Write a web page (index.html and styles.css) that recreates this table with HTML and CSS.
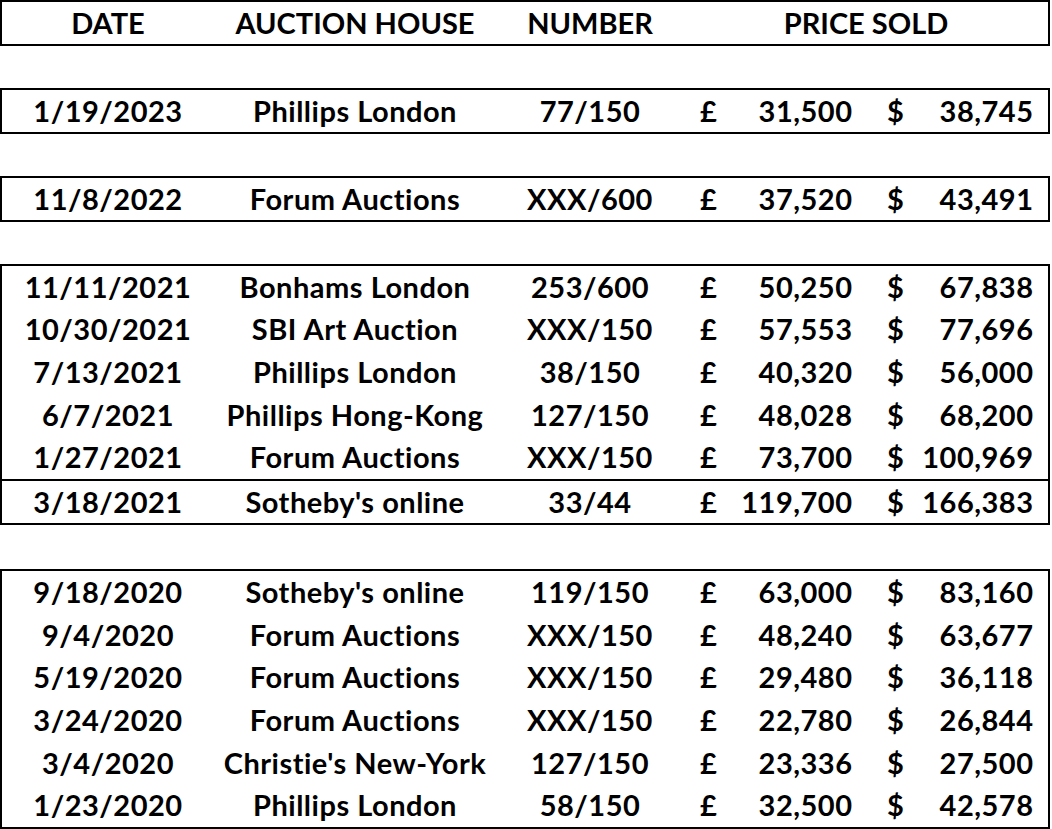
FILE: index.html
```html
<!DOCTYPE html>
<html>
<head>
<meta charset="utf-8">
<link rel="stylesheet" href="styles.css">
</head>
<body>
<div class="sheet">
  <div class="box box-1">
    <div class="row head">
      <div class="c">DATE</div>
      <div class="c">AUCTION HOUSE</div>
      <div class="c">NUMBER</div>
      <div class="c span2">PRICE SOLD</div>
    </div>
  </div>
  <div class="gap"></div>

  <div class="box box-1">
    <div class="row"><div class="c">1/19/2023</div><div class="c">Phillips London</div><div class="c">77/150</div><div class="m gbp"><span>£</span><span>31,500</span></div><div class="m usd"><span>$</span><span>38,745</span></div></div>
  </div>
  <div class="gap"></div>

  <div class="box box-1">
    <div class="row"><div class="c">11/8/2022</div><div class="c">Forum Auctions</div><div class="c">XXX/600</div><div class="m gbp"><span>£</span><span>37,520</span></div><div class="m usd"><span>$</span><span>43,491</span></div></div>
  </div>
  <div class="gap"></div>

  <div class="box box-5">
    <div class="row"><div class="c">11/11/2021</div><div class="c">Bonhams London</div><div class="c">253/600</div><div class="m gbp"><span>£</span><span>50,250</span></div><div class="m usd"><span>$</span><span>67,838</span></div></div>
    <div class="row"><div class="c">10/30/2021</div><div class="c">SBI Art Auction</div><div class="c">XXX/150</div><div class="m gbp"><span>£</span><span>57,553</span></div><div class="m usd"><span>$</span><span>77,696</span></div></div>
    <div class="row"><div class="c">7/13/2021</div><div class="c">Phillips London</div><div class="c">38/150</div><div class="m gbp"><span>£</span><span>40,320</span></div><div class="m usd"><span>$</span><span>56,000</span></div></div>
    <div class="row"><div class="c">6/7/2021</div><div class="c">Phillips Hong-Kong</div><div class="c">127/150</div><div class="m gbp"><span>£</span><span>48,028</span></div><div class="m usd"><span>$</span><span>68,200</span></div></div>
    <div class="row"><div class="c">1/27/2021</div><div class="c">Forum Auctions</div><div class="c">XXX/150</div><div class="m gbp"><span>£</span><span>73,700</span></div><div class="m usd"><span>$</span><span>100,969</span></div></div>
  </div>
  <div class="box box-1 joined">
    <div class="row"><div class="c">3/18/2021</div><div class="c">Sotheby's online</div><div class="c">33/44</div><div class="m gbp"><span>£</span><span>119,700</span></div><div class="m usd"><span>$</span><span>166,383</span></div></div>
  </div>
  <div class="gap gap-wide"></div>

  <div class="box box-6">
    <div class="row"><div class="c">9/18/2020</div><div class="c">Sotheby's online</div><div class="c">119/150</div><div class="m gbp"><span>£</span><span>63,000</span></div><div class="m usd"><span>$</span><span>83,160</span></div></div>
    <div class="row"><div class="c">9/4/2020</div><div class="c">Forum Auctions</div><div class="c">XXX/150</div><div class="m gbp"><span>£</span><span>48,240</span></div><div class="m usd"><span>$</span><span>63,677</span></div></div>
    <div class="row"><div class="c">5/19/2020</div><div class="c">Forum Auctions</div><div class="c">XXX/150</div><div class="m gbp"><span>£</span><span>29,480</span></div><div class="m usd"><span>$</span><span>36,118</span></div></div>
    <div class="row"><div class="c">3/24/2020</div><div class="c">Forum Auctions</div><div class="c">XXX/150</div><div class="m gbp"><span>£</span><span>22,780</span></div><div class="m usd"><span>$</span><span>26,844</span></div></div>
    <div class="row"><div class="c">3/4/2020</div><div class="c">Christie's New-York</div><div class="c">127/150</div><div class="m gbp"><span>£</span><span>23,336</span></div><div class="m usd"><span>$</span><span>27,500</span></div></div>
    <div class="row"><div class="c">1/23/2020</div><div class="c">Phillips London</div><div class="c">58/150</div><div class="m gbp"><span>£</span><span>32,500</span></div><div class="m usd"><span>$</span><span>42,578</span></div></div>
  </div>
</div>
</body>
</html>
```
FILE: styles.css
```css
html, body {
  margin: 0;
  padding: 0;
  background: #fff;
}
.sheet {
  width: 1050px;
  display: flex;
  flex-direction: column;
  font-family: Lato, "Open Sans", sans-serif;
  font-weight: 700;
  font-size: 29px;
  letter-spacing: 0.5px;
  font-variant-ligatures: none;
  font-feature-settings: "liga" 0, "clig" 0;
  color: #000;
}
.box {
  box-sizing: border-box;
  border: 2px solid #000;
  display: flex;
  flex-direction: column;
}
.box-1 { height: 46px; }
.box-5 { height: 217px; }
.box-6 { height: 260px; }
.joined { margin-top: -2px; }
.gap { height: 42px; }
.gap-wide { height: 44px; }
.row {
  flex: 1;
  display: grid;
  grid-template-columns: 212px 282px 188px 184px 180px;
  align-items: center;
  line-height: 1;
  padding-bottom: 2px;
}
.head { letter-spacing: 0; }
.c {
  text-align: center;
  white-space: nowrap;
}
.span2 { grid-column: span 2; }
.m {
  display: flex;
  justify-content: space-between;
  white-space: nowrap;
}
.m span:last-child { margin-right: -0.5px; }
.gbp { padding: 0 16px 0 16px; }
.usd { padding: 0 15px 0 19px; }
```
